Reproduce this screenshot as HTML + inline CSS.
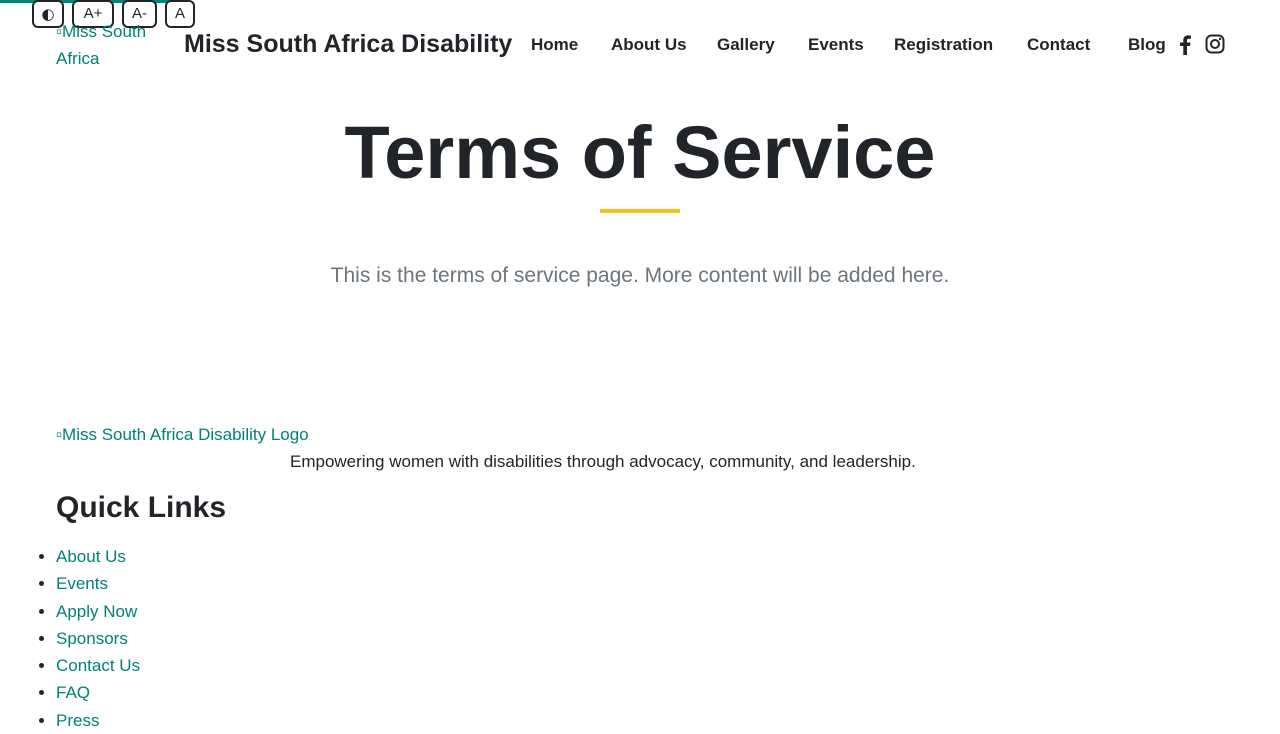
<!DOCTYPE html>
<html><head><meta charset="utf-8"><style>
body{margin:0;font-family:"Liberation Sans",sans-serif;color:#212529;background:#fff;width:1280px;height:720px;overflow:hidden;position:relative}
.bar{position:absolute;left:0;top:0;width:180px;height:3px;background:#00857f}
.acc span{position:absolute;top:0;box-sizing:border-box;height:28px;border:2px solid #212529;border-radius:6px;font-size:15px;line-height:24px;text-align:center;background:#fff}
.logo{position:absolute;left:56px;top:18px;color:#00807a;font-size:17px;line-height:27px;width:110px}
.brand{position:absolute;left:184px;top:30px;font-size:25px;font-weight:bold}
nav{position:absolute;top:35px;left:531px;font-size:17px;font-weight:bold}
nav a{position:absolute;white-space:nowrap}
h1{position:absolute;top:110px;left:0;width:1280px;text-align:center;margin:0;font-size:74px;font-weight:bold}
.line{position:absolute;left:600px;top:209px;width:80px;height:4px;background:#fbbf17}
.p{position:absolute;top:264px;width:1280px;text-align:center;font-size:21px;color:#6c757d}
.t{position:absolute;color:#00807a;font-size:17px}
ul{position:absolute;left:16px;top:543px;margin:0;padding-left:40px;font-size:17px;line-height:27.3px;color:#00807a}
li::marker{color:#212529}
</style></head><body>
<div class="bar"></div>
<div class="acc"><span style="left:32px;width:32px;font-family:'DejaVu Sans',sans-serif">◐</span><span style="left:72px;width:42px">A+</span><span style="left:122px;width:35px">A-</span><span style="left:165px;width:30px">A</span></div>
<div class="logo">▫Miss South Africa</div>
<div class="brand">Miss South Africa Disability</div>
<nav>
<a style="left:0">Home</a><a style="left:80px">About Us</a><a style="left:186px">Gallery</a><a style="left:277px">Events</a><a style="left:363px">Registration</a><a style="left:496px">Contact</a><a style="left:597px">Blog</a>
<svg style="position:absolute;left:648px;top:-1px" width="12" height="21" viewBox="0 0 12 21"><path d="M8 21V12h3l.5-3.5H8V6.5C8 5.5 8.3 4.8 9.8 4.8H12V1.6C11.6 1.5 10.4 1.4 9 1.4 6.1 1.4 4.3 3.1 4.3 6.3V8.5H1V12h3.3v9z" fill="#212529"/></svg>
<svg style="position:absolute;left:674px;top:-1px" width="20" height="20" viewBox="0 0 20 20"><rect x="1.5" y="1.5" width="17" height="17" rx="5" fill="none" stroke="#212529" stroke-width="2"/><circle cx="10" cy="10" r="4" fill="none" stroke="#212529" stroke-width="2"/><circle cx="15" cy="5" r="1.2" fill="#212529"/></svg>
</nav>
<h1>Terms of Service</h1>
<div class="line"></div>
<div class="p">This is the terms of service page. More content will be added here.</div>
<div class="t" style="left:56px;top:425px">▫Miss South Africa Disability Logo</div>
<div style="position:absolute;left:290px;top:452px;font-size:17px">Empowering women with disabilities through advocacy, community, and leadership.</div>
<div style="position:absolute;left:56px;top:491px;font-size:30px;font-weight:bold">Quick Links</div>
<ul><li>About Us</li><li>Events</li><li>Apply Now</li><li>Sponsors</li><li>Contact Us</li><li>FAQ</li><li>Press</li></ul>
</body></html>
